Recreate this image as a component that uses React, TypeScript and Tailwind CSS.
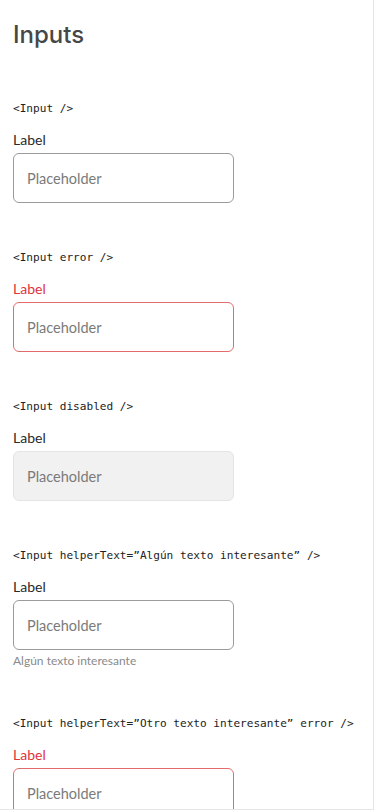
import React from "react";

type FieldProps = {
  code: string;
  error?: boolean;
  disabled?: boolean;
  helperText?: string;
};

const Field = ({ code, error, disabled, helperText }: FieldProps) => {
  const border = error
    ? "border-[#e36b6b]"
    : disabled
      ? "border-[#e4e4e4] bg-[#f1f1f1]"
      : "border-[#9b9b9b] bg-white";
  return (
    <section className="flex flex-col">
      <code className="font-['DejaVu_Sans_Mono',monospace] text-[11.1px] leading-5 text-[#222] whitespace-pre">
        {code}
      </code>
      <label
        className={`mt-[11px] text-[14px] leading-5 ${error ? "text-[#e0343c]" : "text-[#2a2a2a]"}`}
      >
        Label
      </label>
      <input
        disabled={disabled}
        placeholder="Placeholder"
        className={`mt-[3px] h-[50px] w-[221px] rounded-[6px] border pl-[13px] text-[14.5px] text-[#333] outline-none placeholder:text-[#7a7a7a] ${border}`}
      />
      {helperText && (
        <p className="mt-[3px] text-[12px] leading-4 text-[#8a8a8a]">{helperText}</p>
      )}
    </section>
  );
};

export default function App() {
  return (
    <div className="h-[810px] w-[374px] overflow-hidden border-r border-b border-[#e6e6e6] bg-white px-[13px] pt-[19px] font-['Lato',sans-serif]">
      <h1 className="font-['Inter',sans-serif] text-[24px] font-medium leading-8 text-[#474747]">
        Inputs
      </h1>
      <div className="mt-[48px] flex flex-col gap-[45px]">
        <Field code="<Input />" />
        <Field code="<Input error />" error />
        <Field code="<Input disabled />" disabled />
        <Field
          code={"<Input helperText=\u201dAlg\u00fan texto interesante\u201d />"}
          helperText="Algún texto interesante"
        />
        <Field
          code={"<Input helperText=\u201dOtro texto interesante\u201d error />"}
          helperText="Otro texto interesante"
          error
        />
      </div>
    </div>
  );
}
